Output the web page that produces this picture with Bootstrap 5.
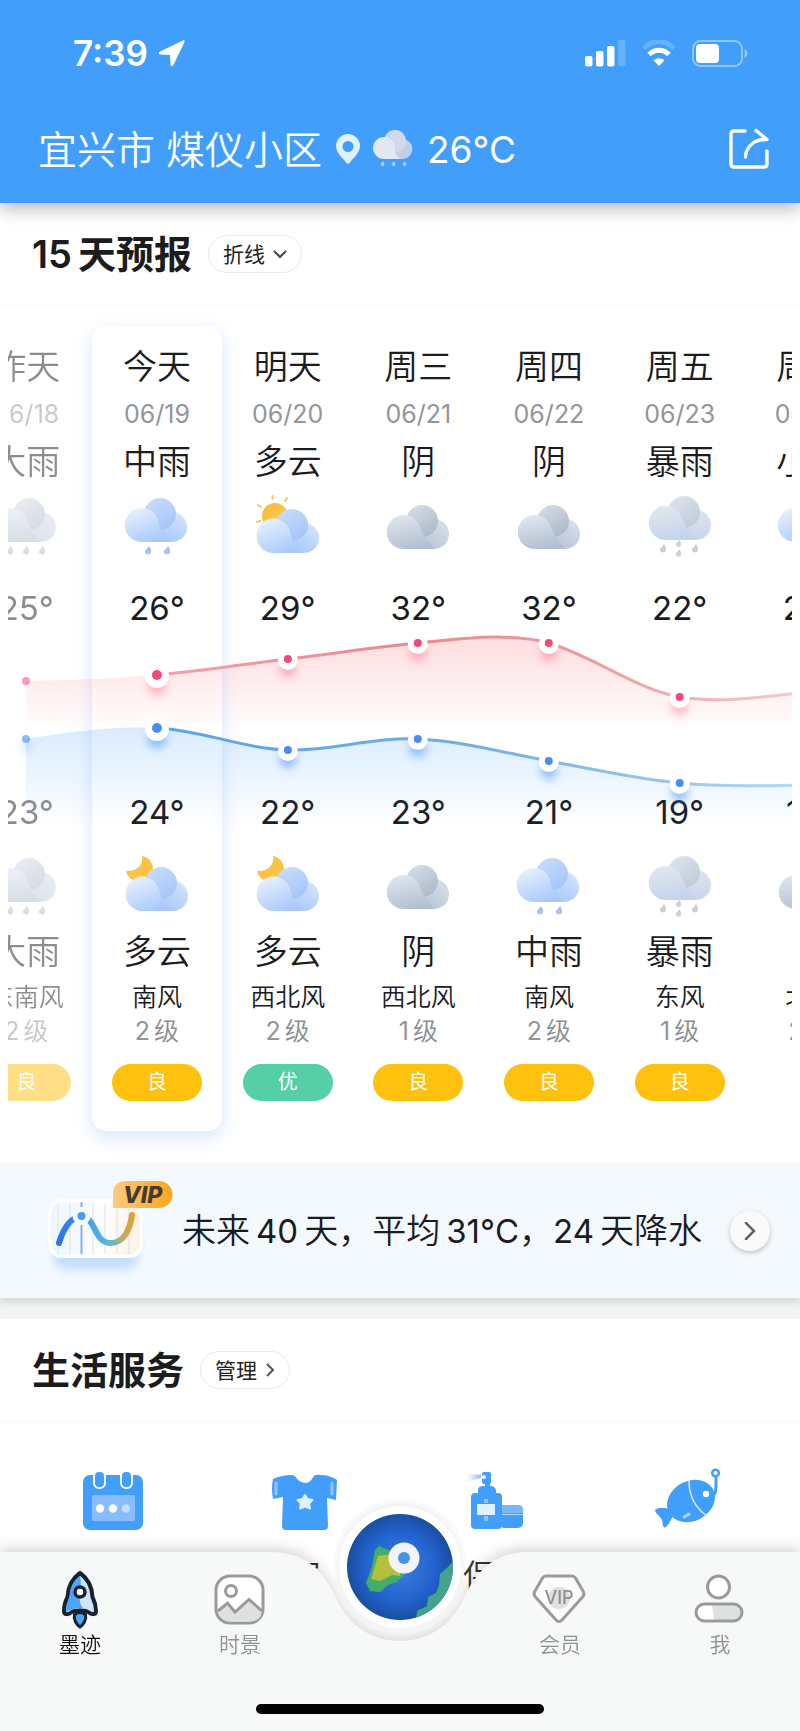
<!DOCTYPE html>
<html lang="zh-CN">
<head>
<meta charset="utf-8">
<meta name="viewport" content="width=device-width, initial-scale=1">
<title>15天预报</title>
<link rel="stylesheet" href="https://cdn.jsdelivr.net/npm/bootstrap@5.3.0/dist/css/bootstrap.min.css">
<style>
  body { font-family: Inter, "Noto Sans CJK SC", sans-serif; color: #1b1c1e; background: #fff; line-height: 1; }
  svg { display: block; flex: none; }
  button { font-family: inherit; }

  .app-head { background: #429efb; color: #fff; padding-bottom: 11px; box-shadow: 0 6px 16px rgba(0,0,0,.28); position: relative; z-index: 2; }
  .status { height: 106px; padding: 0 52px 0 73px; }
  .clock { font-size: 35px; font-weight: 600; }
  .place { height: 86px; padding: 0 30px 0 38px; }
  .place-name { font-size: 39px; font-weight: 350; margin-right: 14px; }
  .place-temp { font-size: 37px; font-weight: 400; margin-left: 13px; }
  .place-icon { margin-left: 13px; }

  .sect-head { padding-left: 32px; height: 103px; border-bottom: 1px solid #f7f8f8; }
  .sect-head h2 { font-size: 38px; font-weight: 600; line-height: 1; margin: 0 16px 0 0; }
  .sect-head h2 span { margin-left: 6px; }
  .pill { height: 38px; font-size: 21px; border: 1px solid #e9e9e9; border-radius: 19px; background: #fff; color: #222; line-height: 1; padding: 0 14px; }

  .strip-clip { overflow: hidden; margin: 0 8px; padding: 20px 0 32px; }
  .strip { width: 116.6667%; margin-left: -6%; position: relative; }
  .day { flex: 1 1 0; min-width: 0; padding: 17px 0 30px; text-align: center; white-space: nowrap; display: flex; flex-direction: column; align-items: center; }
  .day.past > * { opacity: .5; }
  .day.today { background: #fff; border-radius: 14px; box-shadow: 0 6px 18px rgba(80,150,255,.24); }
  .word { font-size: 34px; font-weight: 350; line-height: 48px; }
  .word + svg { margin-top: 2px; }
  .date { font-size: 25px; font-weight: 400; line-height: 47px; color: #939598; }
  .deg { font-size: 33px; font-weight: 400; line-height: 80px; }
  .low { line-height: 72px; margin-top: 128px; }
  .wind { font-size: 25px; font-weight: 350; line-height: 43px; }
  .level { font-size: 25px; font-weight: 350; line-height: 24px; color: #8a8c8f; }
  .level span { font-weight: 400; color: #939598; }
  .aqi { width: 90px; height: 37px; border-radius: 19px; background: #fec10d; color: #fff; font-size: 20px; line-height: 36px; margin-top: 21px; }
  .aqi.good { background: #55cfa5; }
  .chart { position: absolute; left: 0; top: 294px; width: 100%; pointer-events: none; }

  .vip-bar { background: #f4f9fe; height: 135px; padding: 0 30px 0 42px; box-shadow: 0 4px 8px rgba(0,0,0,.12); position: relative; color: #1b1c1e; text-decoration: none; }
  .vip-text { font-size: 34px; font-weight: 350; white-space: nowrap; }
  .vip-text b { font-size: 33px; font-weight: 400; margin: 0 6px; }
  .go { width: 40px; height: 40px; border-radius: 50%; background: #fafafa; box-shadow: 0 2px 5px rgba(0,0,0,.22); }
  .split { height: 21px; background: #f2f3f3; }

  .services { padding: 44px 16px 120px; }
  .service { flex: 1; color: #333; text-decoration: none; font-size: 33px; font-weight: 350; display: flex; flex-direction: column; align-items: center; gap: 24px; }

  .tabs { height: 179px; }
  .tabs-bg { position: absolute; inset: 0; filter: drop-shadow(0 -5px 6px rgba(0,0,0,.14)); }
  .tabs-bg div { background: #f7f9f8; flex: 1; }
  .tabs-row { position: relative; height: 179px; }
  .tab { flex: 1; text-decoration: none; color: #8f9190; font-size: 21px; font-weight: 350; padding-top: 14px; display: flex; flex-direction: column; align-items: center; gap: 4px; }
  .tab.on { color: #111; }
  .globe-cell { flex: 1; display: flex; justify-content: center; align-items: flex-start; }
  .globe { border: 0; padding: 0; background: none; margin-top: -53px; }
  .home-bar { position: absolute; left: 50%; bottom: 17px; transform: translateX(-50%); width: 36%; height: 10px; border-radius: 5px; background: #000; }
</style>
<script src="https://cdn.jsdelivr.net/npm/bootstrap@5.3.0/dist/js/bootstrap.bundle.min.js"></script>
</head>
<body>

<!-- shared weather symbols -->
<svg width="0" height="0" class="position-absolute" aria-hidden="true">
  <defs>
    <linearGradient id="bL" x1=".2" y1="0" x2=".7" y2="1"><stop offset="0" stop-color="#e9f1fc"/><stop offset="1" stop-color="#a8c9fd"/></linearGradient>
    <linearGradient id="bT" x1=".2" y1="0" x2=".7" y2="1"><stop offset="0" stop-color="#c9dcfa"/><stop offset="1" stop-color="#a3c5fc"/></linearGradient>
    <linearGradient id="bR" x1="1" y1="0" x2=".2" y2="1"><stop offset="0" stop-color="#d8e7fd"/><stop offset="1" stop-color="#9fc3fd"/></linearGradient>
    <linearGradient id="gL" x1=".3" y1="0" x2=".6" y2="1"><stop offset="0" stop-color="#e0e6ef"/><stop offset="1" stop-color="#b0bfd0"/></linearGradient>
    <linearGradient id="gT" x1=".2" y1="0" x2=".8" y2="1"><stop offset="0" stop-color="#d5ddea"/><stop offset="1" stop-color="#abb7c6"/></linearGradient>
    <linearGradient id="gR" x1="1" y1="0" x2=".2" y2="1"><stop offset="0" stop-color="#dae2ed"/><stop offset="1" stop-color="#b2c0d2"/></linearGradient>
    <linearGradient id="hL" x1=".3" y1="0" x2=".6" y2="1"><stop offset="0" stop-color="#e2e7f0"/><stop offset="1" stop-color="#c2d3ea"/></linearGradient>
    <linearGradient id="hT" x1=".2" y1="0" x2=".8" y2="1"><stop offset="0" stop-color="#dbe3ef"/><stop offset="1" stop-color="#c0cbd8"/></linearGradient>
    <linearGradient id="hR" x1="1" y1="0" x2=".2" y2="1"><stop offset="0" stop-color="#dde4ef"/><stop offset="1" stop-color="#c3d2e8"/></linearGradient>
    <linearGradient id="sunG" x1="0" y1="0" x2="1" y2="1"><stop offset="0" stop-color="#fbb62c"/><stop offset="1" stop-color="#fcd36d"/></linearGradient>
  </defs>
  <symbol id="cloud-b" viewBox="0 0 80 80">
    <path d="M25 54H55a15 15 0 1 0 -12 -24z" fill="url(#bR)"/><circle cx="43" cy="26" r="16" fill="url(#bT)"/>
    <path d="M25 54a17 17 0 1 1 16 -22c2 8 3 14 9 22z" fill="url(#bL)"/>
  </symbol>
  <symbol id="cloud-g" viewBox="0 0 80 80">
    <path d="M25 54H55a15 15 0 1 0 -12 -24z" fill="url(#gR)"/><circle cx="43" cy="26" r="16" fill="url(#gT)"/>
    <path d="M25 54a17 17 0 1 1 16 -22c3 8 6 12 14 22z" fill="url(#gL)"/>
  </symbol>
  <symbol id="cloud-h" viewBox="0 0 80 80">
    <path d="M25 54H55a15 15 0 1 0 -12 -24z" fill="url(#hR)"/><circle cx="43" cy="26" r="16" fill="url(#hT)"/>
    <path d="M25 54a17 17 0 1 1 16 -22c3 8 6 12 14 22z" fill="url(#hL)"/>
  </symbol>
  <symbol id="drop" viewBox="0 0 8 10"><path d="M5 0C6.500 2 7.500 4 7 6.500A3.300 3.300 0 0 1 .7 6C1 3.500 3.500 2.500 5 0z"/></symbol>
  <symbol id="w-rain" viewBox="0 0 80 80"><use href="#cloud-b" width="80" height="80"/><g fill="#a9c3f0"><use href="#drop" x="27" y="58" width="8" height="10"/><use href="#drop" x="46" y="58" width="8" height="10"/></g></symbol>
  <symbol id="w-over" viewBox="0 0 80 80"><use href="#cloud-g" x="1" y="7" width="80" height="80"/></symbol>
  <symbol id="w-storm" viewBox="0 0 80 80"><use href="#cloud-h" x="1" y="-2" width="80" height="80"/><g fill="#cdd1d6"><use href="#drop" x="19" y="56" width="8" height="10"/><use href="#drop" x="35" y="52" width="7" height="8"/><use href="#drop" x="35" y="61" width="7" height="9"/><use href="#drop" x="51" y="56" width="8" height="10"/></g></symbol>
  <symbol id="w-heavy" viewBox="0 0 80 80"><use href="#cloud-g" width="80" height="80"/><g fill="#b9bec5"><use href="#drop" x="20" y="58" width="8" height="10"/><use href="#drop" x="36" y="58" width="8" height="10"/><use href="#drop" x="52" y="58" width="8" height="10"/></g></symbol>
  <symbol id="w-sun" viewBox="0 0 80 80">
    <circle cx="27" cy="28" r="13" fill="url(#sunG)"/>
    <g stroke="#f5c668" stroke-width="2" stroke-linecap="round"><path d="M24.500 11v-3M37 13l2-3M13 19l-3-2M12 33l-3 1"/></g>
    <circle cx="26" cy="48" r="18" fill="#fff3d0" opacity=".6"/><use href="#cloud-b" x="1" y="11" width="80" height="80"/>
  </symbol>
  <symbol id="w-moon" viewBox="0 0 80 80">
    <path d="M25 8c6 1 11 6 11 13 0 9-8 14-15 13-6-1-11-6-12-11 9 1 18-5 16-15z" fill="#fbc246"/>
    <circle cx="26" cy="46" r="18" fill="#fff3d0" opacity=".6"/><use href="#cloud-b" x="1" y="9" width="80" height="80"/>
  </symbol>
</svg>

<header class="app-head">
  <div class="status d-flex align-items-center">
    <span class="clock">7:39</span>
    <svg class="ms-2" width="30" height="30" viewBox="0 0 30 30" fill="#fff" aria-label="定位"><path d="M27 2.500 4 13.500C2 14.500 2.500 16.500 4.500 16.500L14 17 14.500 26C14.500 28.500 16.800 28.800 17.600 26.800L28.300 4.500C29 2.800 28.300 1.900 27 2.500z"/></svg>
    <div class="ms-auto d-flex align-items-center">
      <svg width="41" height="27" viewBox="0 0 41 27" fill="#fff"><rect x="0" y="16" width="7.500" height="10.500" rx="2"/><rect x="11" y="11" width="7.500" height="15.500" rx="2"/><rect x="22" y="6" width="7.500" height="20.500" rx="2"/><rect x="33" y="0" width="7.500" height="26.500" rx="2" opacity=".2"/></svg>
      <svg class="mx-3" width="34" height="27" viewBox="0 0 34 27" fill="none" stroke="#fff"><path d="M2 8.500C10-.5 24-.5 32 8.500" stroke-width="5" opacity=".2"/><path d="M7 14.500c5.500-5.800 14.500-5.800 20 0" stroke-width="5"/><path d="M17 26l-5.500-5.800c3-2.700 8-2.700 11 0z" fill="#fff" stroke="none"/></svg>
      <svg width="56" height="27" viewBox="0 0 56 27" fill="none"><rect x="1" y="1" width="49" height="25" rx="7.500" stroke="#fff" stroke-width="2" opacity=".4"/><rect x="4" y="4" width="23" height="19" rx="4" fill="#fff"/><path d="M52.500 9c4 2 4 7 0 9z" fill="#fff" opacity=".45"/></svg>
    </div>
  </div>
  <div class="place d-flex align-items-center">
    <span class="place-name">宜兴市 煤仪小区</span>
    <svg width="24" height="30" viewBox="0 0 24 30"><path d="M12 0A12 12 0 0 1 24 12C24 19 17 24 14 28.500Q12 31 10 28.500C7 24 0 19 0 12A12 12 0 0 1 12 0zM12 7a5.500 5.500 0 1 0 0 11 5.500 5.500 0 0 0 0-11z" fill="#dff0ff" fill-rule="evenodd"/></svg>
    <svg class="place-icon" width="41" height="40" viewBox="0 0 41 40"><path d="M11 30H30a10 10 0 1 0-5-19z" fill="#c3cfe8"/><circle cx="22" cy="12" r="11" fill="#d3d9ea"/><path d="M11 30a11 11 0 1 1 11-11c0 5 1 8 5 11z" fill="#e3e7f2"/><g fill="#a9cdf8"><use href="#drop" x="7" y="32" width="5" height="6"/><use href="#drop" x="18" y="32" width="5" height="6"/><use href="#drop" x="29" y="32" width="5" height="6"/></g></svg>
    <span class="place-temp">26°C</span>
    <button class="btn p-0 border-0 ms-auto" type="button" aria-label="分享"><svg width="42" height="42" viewBox="0 0 42 42" fill="none" stroke="#fff" stroke-width="3.400" stroke-linecap="round" stroke-linejoin="round"><path d="M17 3H6Q3 3 3 6V36Q3 39 6 39H36Q39 39 39 36V23"/><path d="M28 2.500 39 11.500C26 11 18 19 17.500 29"/></svg></button>
  </div>
</header>

<main>
  <section>
    <div class="sect-head d-flex align-items-center">
      <h2>15<span>天预报</span></h2>
      <button class="pill d-flex align-items-center gap-2" type="button">折线<svg width="14" height="9" viewBox="0 0 14 9" fill="none" stroke="#444" stroke-width="2"><path d="M1 1l6 6 6-6"/></svg></button>
    </div>

    <div class="strip-clip">
      <div class="strip">
        <div class="d-flex">
          <div class="day past"><div class="word">昨天</div><div class="date">06/18</div><div class="word">大雨</div><svg width="80" height="80"><use href="#w-heavy"/></svg><div class="deg">25°</div><div class="deg low">23°</div><svg width="80" height="80"><use href="#w-heavy"/></svg><div class="word">大雨</div><div class="wind">东南风</div><div class="level"><span class="me-1">2</span>级</div><div class="aqi">良</div></div>
          <div class="day today"><div class="word">今天</div><div class="date">06/19</div><div class="word">中雨</div><svg width="80" height="80"><use href="#w-rain"/></svg><div class="deg">26°</div><div class="deg low">24°</div><svg width="80" height="80"><use href="#w-moon"/></svg><div class="word">多云</div><div class="wind">南风</div><div class="level"><span class="me-1">2</span>级</div><div class="aqi">良</div></div>
          <div class="day"><div class="word">明天</div><div class="date">06/20</div><div class="word">多云</div><svg width="80" height="80"><use href="#w-sun"/></svg><div class="deg">29°</div><div class="deg low">22°</div><svg width="80" height="80"><use href="#w-moon"/></svg><div class="word">多云</div><div class="wind">西北风</div><div class="level"><span class="me-1">2</span>级</div><div class="aqi good">优</div></div>
          <div class="day"><div class="word">周三</div><div class="date">06/21</div><div class="word">阴</div><svg width="80" height="80"><use href="#w-over"/></svg><div class="deg">32°</div><div class="deg low">23°</div><svg width="80" height="80"><use href="#w-over"/></svg><div class="word">阴</div><div class="wind">西北风</div><div class="level"><span class="me-1">1</span>级</div><div class="aqi">良</div></div>
          <div class="day"><div class="word">周四</div><div class="date">06/22</div><div class="word">阴</div><svg width="80" height="80"><use href="#w-over"/></svg><div class="deg">32°</div><div class="deg low">21°</div><svg width="80" height="80"><use href="#w-rain"/></svg><div class="word">中雨</div><div class="wind">南风</div><div class="level"><span class="me-1">2</span>级</div><div class="aqi">良</div></div>
          <div class="day"><div class="word">周五</div><div class="date">06/23</div><div class="word">暴雨</div><svg width="80" height="80"><use href="#w-storm"/></svg><div class="deg">22°</div><div class="deg low">19°</div><svg width="80" height="80"><use href="#w-storm"/></svg><div class="word">暴雨</div><div class="wind">东风</div><div class="level"><span class="me-1">1</span>级</div><div class="aqi">良</div></div>
          <div class="day"><div class="word">周六</div><div class="date">06/24</div><div class="word">小雨</div><svg width="80" height="80"><use href="#w-rain"/></svg><div class="deg">23°</div><div class="deg low">19°</div><svg width="80" height="80"><use href="#w-over"/></svg><div class="word">阴</div><div class="wind">北风</div><div class="level"><span class="me-1">2</span>级</div></div>
        </div>
        <!-- highs and lows; about 131 units per day -->
        <svg class="chart" viewBox="0 0 915 220" overflow="visible" aria-hidden="true">
          <defs>
            <linearGradient id="fillHi" gradientUnits="userSpaceOnUse" x1="0" y1="17" x2="0" y2="112"><stop offset="0" stop-color="#fb6f72" stop-opacity=".24"/><stop offset="1" stop-color="#fb6f72" stop-opacity="0"/></linearGradient>
            <linearGradient id="fillLo" gradientUnits="userSpaceOnUse" x1="0" y1="107" x2="0" y2="208"><stop offset="0" stop-color="#55a4fb" stop-opacity=".22"/><stop offset="1" stop-color="#55a4fb" stop-opacity="0"/></linearGradient>
            <linearGradient id="lineHi" gradientUnits="userSpaceOnUse" x1="196" y1="0" x2="831" y2="0"><stop offset="0" stop-color="#f2a2a8"/><stop offset=".4" stop-color="#e88a90"/><stop offset=".7" stop-color="#ee9da2"/><stop offset="1" stop-color="#f1c9ce"/></linearGradient>
            <linearGradient id="lineLo" gradientUnits="userSpaceOnUse" x1="196" y1="0" x2="831" y2="0"><stop offset="0" stop-color="#5ba3ea"/><stop offset=".5" stop-color="#74aee2"/><stop offset="1" stop-color="#b3d6f5"/></linearGradient>
            <filter id="soft" x="-100%" y="-100%" width="300%" height="300%"><feGaussianBlur stdDeviation="5"/></filter>
          </defs>
          <path fill="url(#fillHi)" d="M65 61C108 60 152 59 196 55S283 44 327 39S413 27 457 23C500 19 545 12 588 23C632 36 675 69 719 77C763 84 806 76 849 72V112H65z"/>
          <path fill="url(#fillLo)" d="M65 119C109 112 152 106 196 108C240 110 283 129 327 130C370 131 413 117 457 119C501 121 544 133 588 141C632 149 675 159 719 163C763 167 806 166 849 165V208H65z"/>
          <g fill="none" stroke-width="3">
            <path stroke="url(#lineHi)" d="M196 55C240 51 283 44 327 39S413 27 457 23C500 19 545 12 588 23C632 36 675 69 719 77C763 84 806 76 849 72"/>
            <path stroke="url(#lineLo)" d="M196 108C240 110 283 129 327 130C370 131 413 117 457 119C501 121 544 133 588 141C632 149 675 159 719 163C763 167 806 166 849 165"/>
          </g>
          <g filter="url(#soft)" fill="#fd7288" opacity=".55"><circle cx="196" cy="66" r="9"/><circle cx="327" cy="49" r="8"/><circle cx="457" cy="33" r="8"/><circle cx="588" cy="33" r="8"/><circle cx="719" cy="87" r="8"/></g>
          <g filter="url(#soft)" fill="#4b97ff" opacity=".65"><circle cx="65" cy="126" r="5" opacity=".5"/><circle cx="196" cy="119" r="9"/><circle cx="327" cy="140" r="8"/><circle cx="457" cy="129" r="8"/><circle cx="588" cy="151" r="8"/><circle cx="719" cy="173" r="8"/></g>
          <g fill="#fff"><circle cx="196" cy="56" r="12"/><circle cx="327" cy="40" r="10"/><circle cx="457" cy="24" r="10"/><circle cx="588" cy="24" r="10"/><circle cx="719" cy="78" r="10"/><circle cx="196" cy="109" r="12"/><circle cx="327" cy="131" r="10"/><circle cx="457" cy="120" r="10"/><circle cx="588" cy="142" r="10"/><circle cx="719" cy="164" r="10"/></g>
          <g fill="#f04a7b"><circle cx="65" cy="61" r="4" opacity=".55"/><circle cx="196" cy="55" r="5"/><circle cx="327" cy="39" r="4"/><circle cx="457" cy="23" r="4"/><circle cx="588" cy="23" r="4"/><circle cx="719" cy="77" r="4"/></g>
          <g fill="#4a8df0"><circle cx="65" cy="119" r="4" opacity=".6"/><circle cx="196" cy="108" r="5"/><circle cx="327" cy="130" r="4"/><circle cx="457" cy="119" r="4"/><circle cx="588" cy="141" r="4"/><circle cx="719" cy="163" r="4"/></g>
        </svg>
      </div>
    </div>

    <a class="vip-bar d-flex align-items-center" href="#">
      <svg width="140" height="114" viewBox="0 0 140 114" aria-label="VIP">
        <defs>
          <linearGradient id="wave" gradientUnits="userSpaceOnUse" x1="17" y1="0" x2="92" y2="0"><stop offset="0" stop-color="#2e72f0"/><stop offset=".45" stop-color="#4aa5e8"/><stop offset=".7" stop-color="#62bccb"/><stop offset=".88" stop-color="#c9aa57"/><stop offset="1" stop-color="#e8a02e"/></linearGradient>
          <linearGradient id="tag" x1="0" y1="0" x2="1" y2="0"><stop offset="0" stop-color="#fccb7e"/><stop offset="1" stop-color="#f8a81c"/></linearGradient>
          <linearGradient id="panel" x1="0" y1="0" x2="1" y2="0"><stop offset="0" stop-color="#eef6fe"/><stop offset=".6" stop-color="#fdfdfe"/><stop offset="1" stop-color="#fef2e4"/></linearGradient>
        </defs>
        <rect x="12" y="46" width="84" height="50" rx="12" fill="#7ab4fb" opacity=".4" filter="url(#soft)"/>
        <rect x="6" y="25" width="95" height="59" rx="14" fill="#fff"/><rect x="9" y="28" width="89" height="53" rx="12" fill="url(#panel)"/>
        <g stroke="#dbe1ea"><path d="M16 30V80M28 30V80M51 30V80M63 30V80M75 30V80M87 30V80"/></g><path d="M39.500 28V80" stroke="#7fb5e6" stroke-width="2"/>
        <path d="M17 69C22 53 29 43 39 43C55 43 51 69 69 69C82 69 88 55 90 41" fill="none" stroke="url(#wave)" stroke-width="6" stroke-linecap="round"/>
        <circle cx="39.500" cy="42" r="9" fill="#f3f9ff"/><circle cx="39.500" cy="42" r="4" fill="#4a9be8"/>
        <path d="M71 33V20Q71 7 85 7H117A13 13 0 0 1 117 34H72z" fill="url(#tag)"/>
        <text x="81" y="29" font-family="Inter" font-size="23" font-weight="800" font-style="italic" fill="#443a3a">VIP</text>
      </svg>
      <span class="vip-text">未来<b>40</b>天，平均<b class="me-0">31°C</b>，<b class="ms-0">24</b>天降水</span>
      <span class="go ms-auto d-flex align-items-center justify-content-center"><svg width="12" height="18" viewBox="0 0 12 18" fill="none" stroke="#666" stroke-width="2.500" stroke-linecap="round"><path d="M2 1l8 8-8 8"/></svg></span>
    </a>
    <div class="split"></div>
  </section>

  <section>
    <div class="sect-head d-flex align-items-center">
      <h2>生活服务</h2>
      <button class="pill d-flex align-items-center gap-2" type="button">管理<svg width="10" height="14" viewBox="0 0 10 14" fill="none" stroke="#555" stroke-width="2"><path d="M2 1l6 6-6 6"/></svg></button>
    </div>
    <div class="services d-flex">
      <a class="service" href="#"><svg width="70" height="70" viewBox="0 0 70 70"><rect x="6" y="9" width="60" height="55" rx="7" fill="#429efb"/><g fill="#429efb" stroke="#fff" stroke-width="2"><rect x="17" y="5" width="11" height="17" rx="5"/><rect x="44" y="5" width="11" height="17" rx="5"/></g><rect x="15" y="29" width="43" height="26" rx="2" fill="#89bcfd"/><g fill="#fff"><circle cx="23" cy="42.500" r="4.200"/><circle cx="36" cy="42.500" r="4.200"/><circle cx="49" cy="42.500" r="4.200" opacity=".5"/></g></svg><span>日历</span></a>
      <a class="service" href="#"><svg width="70" height="70" viewBox="0 0 70 70"><path d="M4 13Q13 9 22 9 26 9 28 13 32 17 37 17 42 16 44 11 46 8 51 9 61 9 68 14L67 34 58 32 59 60Q59 64 55 64H17Q13 64 13 60L14 31 4 33Q2 23 4 13z" fill="#429efb"/><g stroke="#8fc4fe" stroke-width="3" stroke-linecap="round"><path d="M7 17V28M63 17V28"/></g><path d="M36 29l2.500 4 5 1-3.500 3.500 1 5-5-2-5 2 1-5-3.500-3.500 5-1z" fill="#dff0ff" stroke="#dff0ff" stroke-width="2" stroke-linejoin="round"/></svg><span>穿</span></a>
      <a class="service" href="#"><svg width="70" height="70" viewBox="0 0 70 70"><defs><linearGradient id="mist" x1="0" x2="1" y1="0" y2="0"><stop offset="0" stop-color="#bfdcfd" stop-opacity="0"/><stop offset="1" stop-color="#8fbcf5"/></linearGradient></defs><rect x="38" y="39" width="24" height="23" rx="5" fill="#429efb"/><path d="M38 39H57Q62 39 62 44V47H38z" fill="#7ab8fd"/><path d="M38 48.500H62" stroke="#fff" opacity=".6"/><rect x="10" y="27" width="31" height="36" rx="4" fill="#429efb"/><path d="M17 27V23Q18 20 22 20H29Q34 20 35 24V27zM24 20v-4h5v4z" fill="#429efb"/><rect x="21" y="6" width="9" height="12" rx="2" fill="#429efb"/><path d="M20 9L5 7v9l15-4z" fill="url(#mist)"/><circle cx="23" cy="11" r="2" fill="#fff"/><path d="M25 33v4M25 50v5" stroke="#8fc4fe" stroke-width="4"/><rect x="16" y="38" width="18" height="11" rx="1" fill="#dff0ff"/></svg><span>保湿</span></a>
      <a class="service" href="#"><svg width="70" height="70" viewBox="0 0 70 70"><ellipse cx="38" cy="35" rx="25" ry="20" transform="rotate(-28 38 35)" fill="#429efb"/><path d="M21 47C19 53 16 58 13 61 10 63 10 59 9 54 7 50 2 47 2 44 7 40 14 44 19 41z" fill="#429efb"/><path d="M36 15C36 31 44 43 54 50" fill="none" stroke="#d6eaff" stroke-width="1.500"/><circle cx="53" cy="28" r="3.200" fill="#fff"/><circle cx="62.500" cy="7" r="3.300" fill="none" stroke="#429efb" stroke-width="2.500"/><path d="M63 10V21Q63 28 59 31" fill="none" stroke="#429efb" stroke-width="3"/><path d="M31 51l5-3" stroke="#a9d2fe" stroke-width="3" stroke-linecap="round"/></svg><span>钓鱼</span></a>
    </div>
  </section>
</main>

<nav class="tabs fixed-bottom" aria-label="主导航">
  <div class="tabs-bg d-flex">
    <div></div>
    <svg width="280" height="179" viewBox="0 0 280 179"><path fill="#f7f9f8" d="M0 0H10C42 0 61 14 76 46C89 74 112 89 140 89C168 89 191 74 204 46C219 14 238 0 270 0H280V179H0z"/></svg>
    <div></div>
  </div>
  <div class="tabs-row d-flex">
    <a class="tab on" href="#"><svg width="56" height="64" viewBox="0 0 56 64"><g stroke="#16222e" stroke-width="4" stroke-linejoin="round"><path d="M28 7C35 12 40 19 40.500 31 43 36 44 40 44 45 44 49 40 49 36 46 34 44 22 44 20 46 16 49 12 49 12 45 12 40 13 36 15.500 31 16 19 21 12 28 7z" fill="#cfe5fd"/></g><path d="M28 10C31 25 24 34 31 42 22 42 18 44 14 46 14 40 15 36 17.500 31 18 21 22 14 28 10z" fill="#4ea5f8"/><circle cx="28" cy="26" r="5" fill="#fff" stroke="#16222e" stroke-width="3.500"/><path d="M22.500 48.500Q28 44.500 33.500 48.500C35 54 31 59 28 61 25 59 21 54 22.500 48.500z" fill="#4ea5f8" stroke="#16222e" stroke-width="3"/></svg>墨迹</a>
    <a class="tab" href="#"><svg width="56" height="64" viewBox="0 0 56 64"><rect x="4" y="10" width="47" height="47" rx="14" fill="#fff" stroke="#999b9a" stroke-width="3"/><path d="M6 45L15.500 37 23 46 37 33.500 50 45Q49 55.500 38 55.500H18Q8 55.500 6 45z" fill="#dfe1e0"/><path d="M6 45L15.500 37 23 46 37 33.500 50 45" fill="none" stroke="#999b9a" stroke-width="3"/><circle cx="19" cy="25" r="5.500" fill="none" stroke="#999b9a" stroke-width="3"/></svg>时景</a>
    <div class="globe-cell">
      <button class="globe" type="button" aria-label="地图">
        <svg width="136" height="136" viewBox="0 0 136 136">
          <defs><radialGradient id="sea"><stop offset="0" stop-color="#3f7fdb"/><stop offset=".65" stop-color="#2363cf"/><stop offset="1" stop-color="#184f9f"/></radialGradient>
          <radialGradient id="halo"><stop offset=".84" stop-color="#777" stop-opacity=".12"/><stop offset="1" stop-color="#777" stop-opacity="0"/></radialGradient><clipPath id="disc"><circle cx="68" cy="68" r="53"/></clipPath></defs>
          <circle cx="68" cy="66" r="68" fill="url(#halo)"/><circle cx="68" cy="68" r="61" fill="#fff"/><circle cx="68" cy="68" r="53" fill="url(#sea)"/>
          <g clip-path="url(#disc)"><path d="M47 47L43 51 40 68 34 84 38 92 48 93 56 86 65 83 75 73 72 58z" fill="#43ad6c"/><path d="M46 57L42 70 39 80 48 82 60 76 68 77 69 61 61 55z" fill="#b6bf3b"/><path d="M124 58L116 68 108 75 107 86 104 94 96 98 95 107 85 112 84 123 125 124z" fill="#44a38c"/></g>
          <circle cx="72" cy="59" r="15.500" fill="#f1f5fb"/><circle cx="72" cy="59" r="6" fill="#4593e6"/>
        </svg>
      </button>
    </div>
    <a class="tab" href="#"><svg width="56" height="64" viewBox="0 0 56 64"><path d="M14 10H40Q42 10 43.500 12L51 25Q53 28 50.500 31L30 54Q27 57 24 54L3.500 31Q1 28 3 25L10.500 12Q12 10 14 10z" fill="#fbfcfb" stroke="#999b9a" stroke-width="3"/><circle cx="27" cy="32" r="11" fill="#dfe1e0"/><text x="27" y="38" text-anchor="middle" font-family="Inter" font-size="18" font-weight="500" fill="#8f9190">VIP</text></svg>会员</a>
    <a class="tab" href="#"><svg width="56" height="64" viewBox="0 0 56 64"><circle cx="26.500" cy="21" r="11" fill="#fff" stroke="#999b9a" stroke-width="3"/><rect x="4" y="38" width="46" height="17" rx="8.500" fill="#fff"/><path d="M20 38H41a8.500 8.500 0 0 1 0 17H22z" fill="#dfe1e0"/><rect x="4" y="38" width="46" height="17" rx="8.500" fill="none" stroke="#999b9a" stroke-width="3"/></svg>我</a>
  </div>
  <div class="home-bar"></div>
</nav>
</body>
</html>
